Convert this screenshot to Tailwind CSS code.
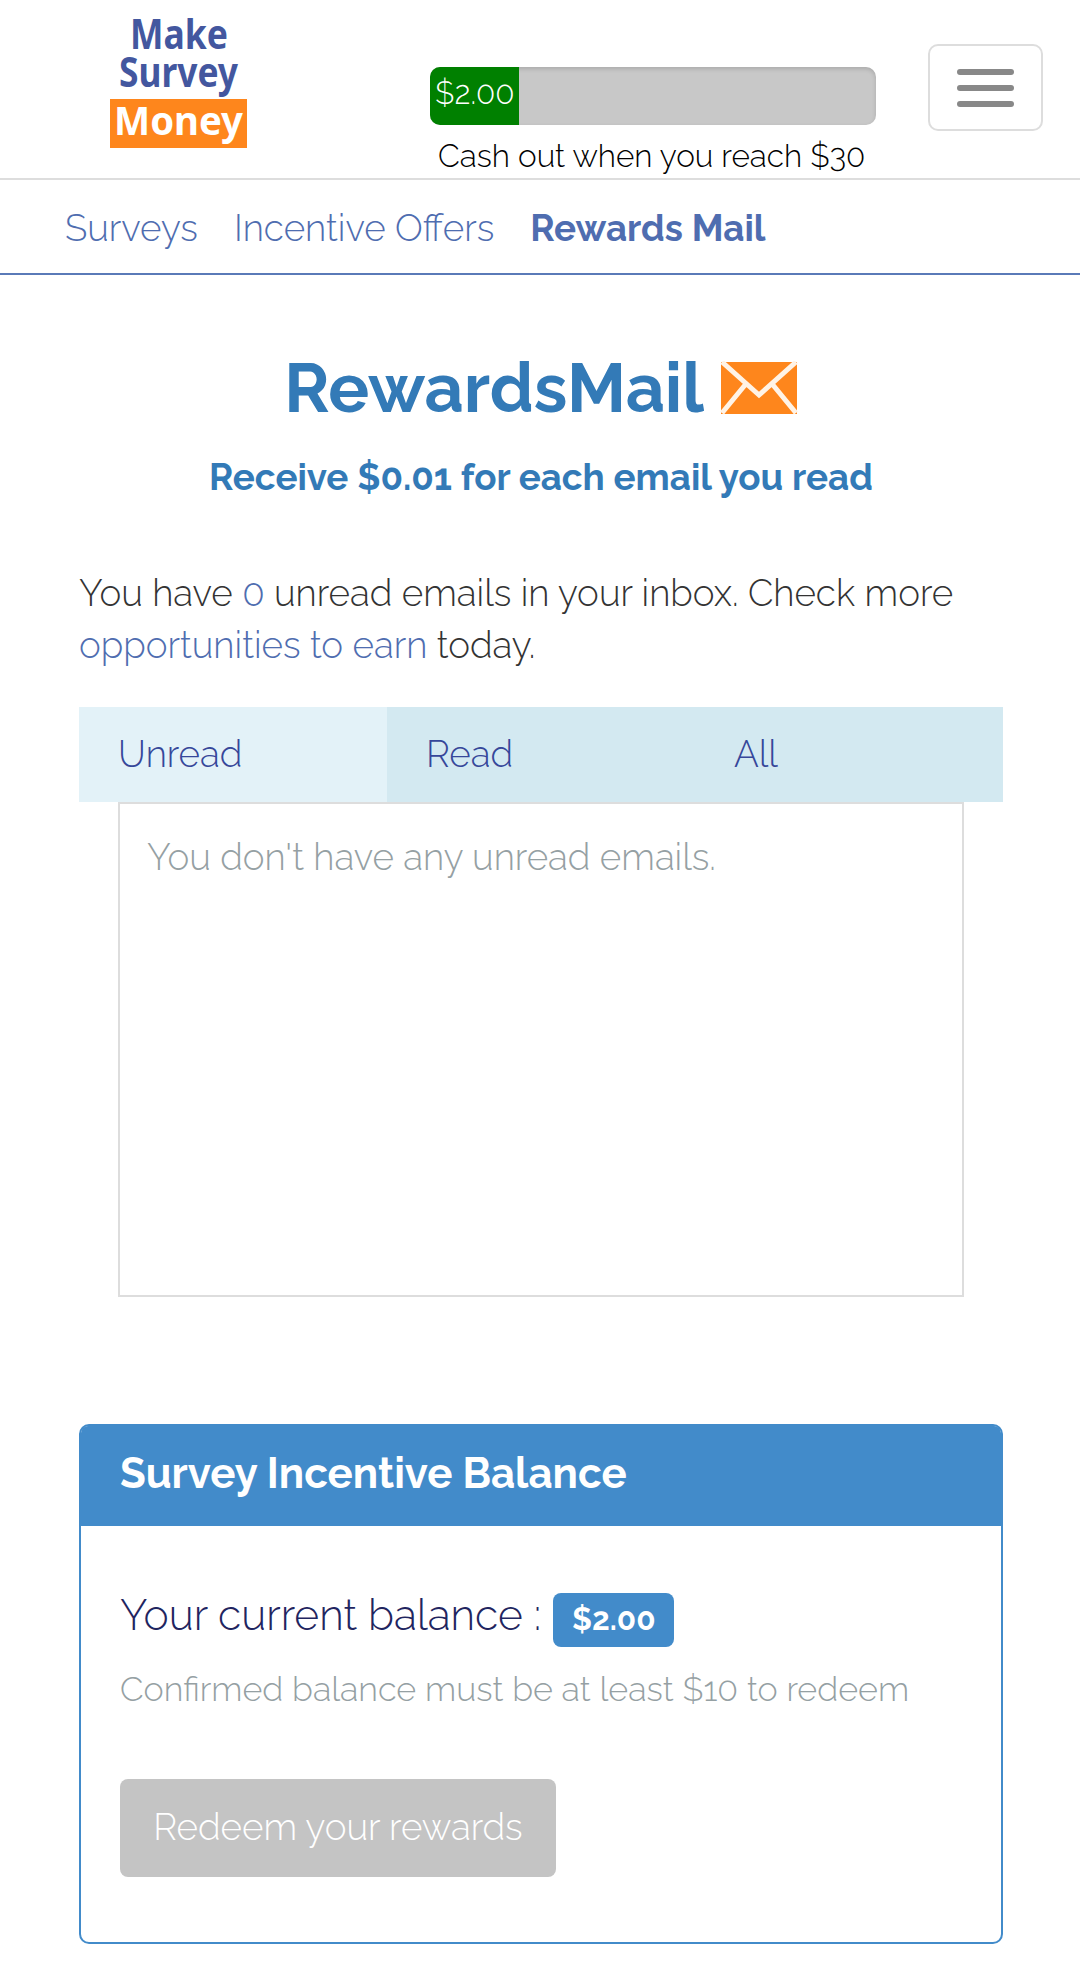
<!DOCTYPE html>
<html lang="en">

<head>
    <meta charset="UTF-8">
    <meta name="viewport" content="width=device-width, initial-scale=1.0">
    <title>Rewards Mail</title>
    <script src="https://cdn.jsdelivr.net/npm/@tailwindcss/browser@4"></script>
</head>

<body class="bg-white font-['Raleway','Lato',sans-serif] font-light oldstyle-nums text-[36.75px] text-[#333]">
    <header class="h-[180px] border-b-2 border-[#ddd] flex items-start">
        <svg class="ml-[110px] w-[137px] h-[150px] shrink-0 overflow-visible" viewBox="0 -12 137 150" font-family="'Noto Sans', sans-serif" font-weight="700">
            <rect x="0" y="87" width="137" height="49" fill="#fe861c" />
            <text x="20" y="37" font-size="41" fill="#43579f" textLength="98" lengthAdjust="spacingAndGlyphs">Make</text>
            <text x="9" y="75" font-size="41" fill="#43579f" textLength="119" lengthAdjust="spacingAndGlyphs">Survey</text>
            <text x="4" y="123" font-size="40" fill="#fff" textLength="129" lengthAdjust="spacingAndGlyphs">Money</text>
        </svg>

        <div class="ml-[183px] mt-[67px] w-[446px] shrink-0">
            <div class="h-[58px] rounded-[10px] bg-[#c8c8c8] overflow-hidden shadow-[inset_0_2px_4px_rgba(0,0,0,0.15)]">
                <div class="h-full w-[89px] bg-[#008000] pl-[5px] text-[31.5px] leading-[52px] text-white">$2.00</div>
            </div>
            <p class="mt-[11px] pl-[8px] text-[31.5px] leading-10 text-black whitespace-nowrap">Cash out when you reach $30</p>
        </div>

        <button class="ml-[52px] mt-[44px] w-[115px] h-[87px] border-2 border-[#ddd] rounded-[10px] flex flex-col items-center justify-center gap-[10px]">
            <span class="w-[57px] h-[6px] rounded-full bg-[#888]"></span>
            <span class="w-[57px] h-[6px] rounded-full bg-[#888]"></span>
            <span class="w-[57px] h-[6px] rounded-full bg-[#888]"></span>
        </button>
    </header>

    <nav class="h-[95px] border-b-2 border-[#5a7ab8] flex items-center gap-9 pl-[65px] pt-[5px] text-[#4f6db0]">
        <a href="#">Surveys</a>
        <a href="#">Incentive Offers</a>
        <a href="#" class="font-bold">Rewards Mail</a>
    </nav>

    <main class="mx-[79px] w-[924px]">
        <h1 class="mt-[75px] flex items-center justify-center gap-[16px] text-[68.25px] leading-[76px] font-bold text-[#337ab7]">
            RewardsMail
            <svg class="w-[78px] h-[54px]" viewBox="0 0 78 54">
                <rect x="1" y="1" width="76" height="52" fill="#fe861c" />
                <path d="M2 1 L39 34 L76 1 M2 52 L25 24 M76 52 L53 24" fill="none" stroke="#fff3e6" stroke-width="5" />
            </svg>
        </h1>
        <h2 class="mt-[31px] text-center text-[36.75px] leading-10 font-bold text-[#337ab7]">Receive $0.01 for each email you read</h2>

        <p class="mt-[70px] leading-[52px] whitespace-nowrap">
            You have <a href="#" class="text-[#4f6db0]">0</a> unread emails in your inbox. Check more<br>
            <a href="#" class="text-[#4f6db0]">opportunities to earn</a> today.
        </p>

        <div class="mt-[36px] grid grid-cols-3 bg-[#d3e9f1] leading-[95px] text-[#36479a]">
            <a href="#" class="bg-[#e3f2f8] pl-[39px]">Unread</a>
            <a href="#" class="pl-[39px]">Read</a>
            <a href="#" class="pl-[39px]">All</a>
        </div>
        <div class="mx-[39px] h-[495px] border-2 border-[#ddd] pt-[27px] pl-[27px] leading-[52px] text-[#95a0a3]">
            You don't have any unread emails.
        </div>

        <section class="mt-[127px] h-[520px] border-2 border-[#428bca] rounded-[10px]">
            <h3 class="h-[100px] bg-[#428bca] rounded-t-[7px] pl-[39px] text-[42px] leading-[96px] font-bold text-white">Survey Incentive Balance</h3>
            <div class="pl-[39px] pt-[67px]">
                <div class="flex items-start gap-[12px]">
                    <span class="text-[42.5px] leading-[44px] text-[#1f2560]">Your current balance :</span>
                    <span class="w-[121px] h-[54px] rounded-[8px] bg-[#428bca] text-center text-[31.5px] leading-[51px] font-bold text-white">$2.00</span>
                </div>
                <p class="mt-[22px] text-[34.1px] leading-10 text-[#95a0a3]">Confirmed balance must be at least $10 to redeem</p>
                <button class="mt-[70px] block w-[436px] h-[98px] rounded-[8px] bg-[#c4c4c4] text-white">Redeem your rewards</button>
            </div>
        </section>
    </main>
</body>

</html>
